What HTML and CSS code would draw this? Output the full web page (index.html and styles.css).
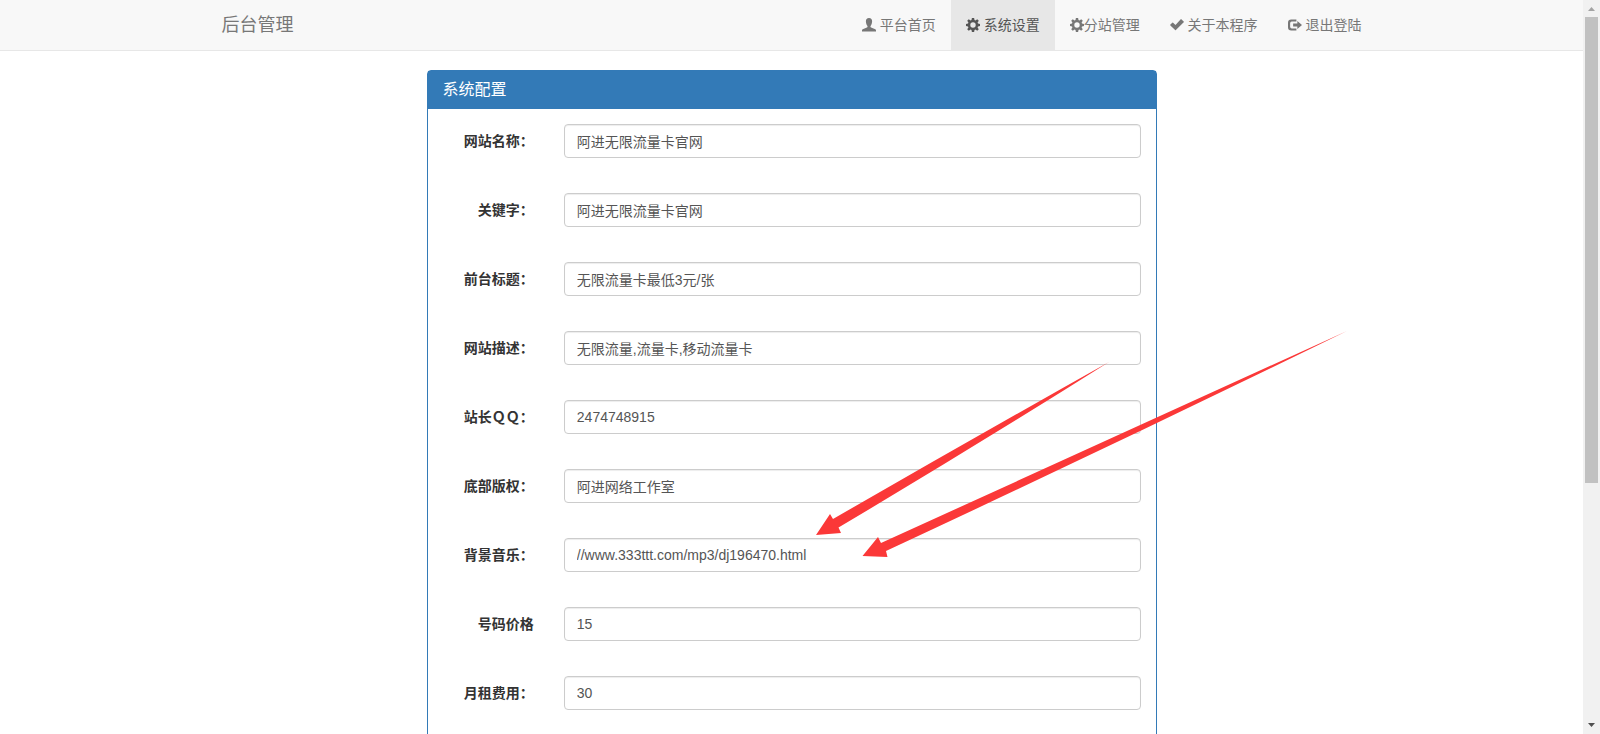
FILE: index.html
```html
<!DOCTYPE html>
<html lang="zh-CN">
<head>
<meta charset="utf-8">
<title>后台管理</title>
<link rel="stylesheet" href="styles.css">
</head>
<body>
<svg class="sprite" aria-hidden="true">
  <symbol id="i-user" viewBox="0 0 14 14"><path d="M7 0C4.900 0 3.800 1.500 3.900 3.400C4 5.300 4.600 6.800 5.300 7.700C5.700 8.300 5.600 9.100 4.900 9.400L1.300 10.900C.5 11.200 0 11.700 0 12.500V13.500H14V12.500C14 11.700 13.500 11.200 12.700 10.900L9.100 9.400C8.400 9.100 8.300 8.300 8.700 7.700C9.400 6.800 10 5.300 10.100 3.400C10.200 1.500 9.100 0 7 0Z"/></symbol>
  <symbol id="i-cog" viewBox="0 0 14 14"><path fill-rule="evenodd" d="M5.900 0H8.100L8.500 2L9.500 2.400L11.200 1.200L12.800 2.800L11.600 4.500L12 5.500L14 5.900V8.100L12 8.500L11.600 9.500L12.800 11.200L11.200 12.800L9.500 11.600L8.500 12L8.100 14H5.900L5.500 12L4.500 11.600L2.800 12.800L1.200 11.200L2.400 9.500L2 8.500L0 8.100V5.900L2 5.500L2.400 4.500L1.200 2.800L2.800 1.200L4.500 2.400L5.500 2ZM7 4.300A2.700 2.700 0 1 0 7 9.700A2.700 2.700 0 1 0 7 4.300Z"/></symbol>
  <symbol id="i-ok" viewBox="0 0 14 14"><path d="M11.300 1.200L13.700 3.500Q14.100 3.900 13.700 4.300L5.900 12.100Q5.500 12.500 5.100 12.100L.4 7.400Q0 7 .4 6.600L2.300 4.700Q2.700 4.300 3.100 4.700L5.500 7.100L10.500 1.600Q10.900 .9 11.300 1.200Z"/></symbol>
  <symbol id="i-out" viewBox="0 0 15 14"><path d="M9 1H3.500Q0 1 0 4.500V9.500Q0 13 3.500 13H9V10.700H4Q2.300 10.700 2.300 9V5Q2.300 3.300 4 3.300H9ZM10 2.800L15 7L10 11.200V8.600H5.500V5.400H10Z"/></symbol>
</svg>
<div class="window">
  <div class="page">
    <header class="navbar">
      <div class="container">
        <a class="brand" href="#">后台管理</a>
        <nav class="nav">
          <a href="#"><svg class="icon"><use href="#i-user"/></svg> 平台首页</a>
          <a href="#" class="active"><svg class="icon"><use href="#i-cog"/></svg> 系统设置</a>
          <a href="#"><svg class="icon"><use href="#i-cog"/></svg>分站管理</a>
          <a href="#"><svg class="icon"><use href="#i-ok"/></svg> 关于本程序</a>
          <a href="#"><svg class="icon"><use href="#i-out"/></svg> 退出登陆</a>
        </nav>
      </div>
    </header>
    <main class="panel">
      <h1 class="panel-title">系统配置</h1>
      <form class="panel-body">
        <div class="row"><label for="name">网站名称：</label><div class="field"><input id="name" type="text" value="阿进无限流量卡官网"></div></div>
        <div class="row"><label for="keywords">关键字：</label><div class="field"><input id="keywords" type="text" value="阿进无限流量卡官网"></div></div>
        <div class="row"><label for="title">前台标题：</label><div class="field"><input id="title" type="text" value="无限流量卡最低3元/张"></div></div>
        <div class="row"><label for="desc">网站描述：</label><div class="field"><input id="desc" type="text" value="无限流量,流量卡,移动流量卡"></div></div>
        <div class="row"><label for="qq">站长ＱＱ：</label><div class="field"><input id="qq" type="text" value="2474748915"></div></div>
        <div class="row"><label for="copyright">底部版权：</label><div class="field"><input id="copyright" type="text" value="阿进网络工作室"></div></div>
        <div class="row"><label for="music">背景音乐：</label><div class="field"><input id="music" type="text" value="//www.333ttt.com/mp3/dj196470.html"></div></div>
        <div class="row"><label for="price">号码价格</label><div class="field"><input id="price" type="text" value="15"></div></div>
        <div class="row"><label for="rent">月租费用：</label><div class="field"><input id="rent" type="text" value="30"></div></div>
      </form>
      <svg class="arrows" viewBox="0 0 540 240" aria-hidden="true">
        <path d="M6 210L20 189L23 194Q160 115 299 37Q166 121 28.500 202.500L31 208Z"/>
        <path d="M52.500 231L68 212L71 218L537 6Q310 117 76 226L77.500 232Z"/>
      </svg>
    </main>
  </div>
  <div class="scrollbar" aria-hidden="true">
    <svg class="step" viewBox="0 0 17 17"><path class="up" d="M5 11L8.500 7L12 11Z"/></svg>
    <div class="track"><div class="thumb"></div></div>
    <svg class="step" viewBox="0 0 17 17"><path class="down" d="M5 6L8.500 10L12 6Z"/></svg>
  </div>
</div>
</body>
</html>
```
FILE: styles.css
```css
* { box-sizing: border-box; }
body {
  margin: 0;
  background: #fff;
  color: #333;
  font: 14px/20px "Liberation Sans", "Noto Sans CJK SC", sans-serif;
}
.sprite { display: none; }
.window { display: flex; height: 100vh; overflow: hidden; }
.page { flex: 1; min-width: 0; overflow: hidden; }

.navbar { background: #f8f8f8; border-bottom: 1px solid #e7e7e7; }
.container {
  display: flex;
  justify-content: space-between;
  max-width: 1170px;
  margin: 0 auto;
}
.brand, .nav a { padding: 15px; color: #777; text-decoration: none; white-space: nowrap; }
.brand { font-size: 18px; }
.nav { display: flex; }
.nav .active { background: #e7e7e7; color: #555; }
.icon { width: 14px; height: 14px; fill: currentColor; vertical-align: -2px; }

.panel {
  position: relative;
  max-width: 730px;
  margin: 19px auto 0;
  border: 1px solid #337ab7;
  border-radius: 4px;
}
.panel-title {
  margin: 0;
  padding: 9px 15px;
  background: #337ab7;
  color: #fff;
  font-size: 16px;
  font-weight: 400;
  line-height: 20px;
}
.panel-body { display: grid; gap: 35px; padding: 15px 0 80px; }
.row { display: grid; grid-template-columns: 2fr 10fr; align-items: center; }
.row label { padding: 0 15px; font-weight: 700; text-align: right; white-space: nowrap; }
.field { padding: 0 15px; }
.field input {
  display: block;
  width: 100%;
  height: 34px;
  padding: 6px 12px;
  border: 1px solid #ccc;
  border-radius: 4px;
  background: #fff;
  box-shadow: inset 0 1px 1px rgba(0, 0, 0, .075);
  color: #555;
  font: inherit;
}

/* Pointers laid over the form */
.arrows {
  position: absolute;
  top: 254px;
  left: 382px;
  width: 540px;
  height: 240px;
  fill: #fb3838;
  pointer-events: none;
}

.scrollbar { display: flex; flex-direction: column; width: 17px; background: #f1f1f1; }
.step { width: 17px; height: 17px; }
.up { fill: #a3a3a3; }
.down { fill: #505050; }
.track { flex: 1; padding: 0 2px; }
.thumb { height: 66.5%; background: #c1c1c1; }
```
